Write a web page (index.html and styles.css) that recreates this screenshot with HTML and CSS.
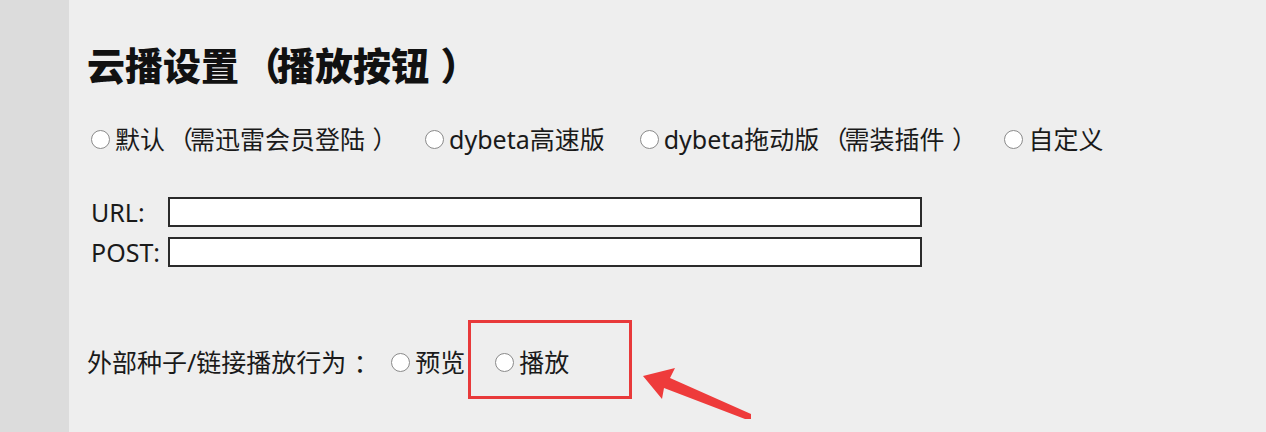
FILE: index.html
```html
<!doctype html>
<html lang="zh-CN">
<head>
    <meta charset="UTF-8">
    <title>云播设置</title>
    <link rel="stylesheet" href="styles.css">
</head>
<body>
<div class="side"></div>
<div class="main">
    <h2 class="title">云播设置<span class="po">（</span>播放按钮<span class="pc">）</span></h2>

    <div class="opts">
        <label class="opt"><input type="radio" name="player">默认<span class="po">（</span>需迅雷会员登陆<span class="pc">）</span></label>
        <label class="opt"><input type="radio" name="player">dybeta高速版</label>
        <label class="opt"><input type="radio" name="player">dybeta拖动版<span class="po">（</span>需装插件<span class="pc">）</span></label>
        <label class="opt"><input type="radio" name="player">自定义</label>
    </div>

    <div class="fields">
        <label for="url">URL:</label>
        <input id="url" type="text">
        <label for="post">POST:</label>
        <input id="post" type="text">
    </div>

    <div class="behave">
        <span class="behave-label">外部种子/链接播放行为<span class="pc">：</span></span>
        <label class="opt"><input type="radio" name="act">预览</label>
        <label class="opt"><input type="radio" name="act">播放</label>
    </div>

    <div class="mark"></div>
    <svg class="arrow" width="120" height="60" viewBox="0 0 120 60">
        <polygon points="3,12 35,4 30,14 111,50 111,55 105,55 24,24 22,35" fill="#ee3b3b"/>
    </svg>
</div>
</body>
</html>
```

FILE: styles.css
```css
* {
    margin: 0;
    padding: 0;
    box-sizing: border-box;
}

html,
body {
    width: 100%;
    height: 100%;
}

body {
    display: flex;
    overflow: hidden;
    font-family: "Noto Sans", "Noto Sans CJK SC", sans-serif;
    color: #1a1a1a;
    background: #eeeeee;
}

/* full-width punctuation sits nearer the middle of its cell in the original font */
.po {
    padding-left: 0.12em;
    letter-spacing: -0.12em;
}

.pc {
    padding-left: 0.3em;
    letter-spacing: -0.3em;
}

.side {
    width: 69px;
    flex-shrink: 0;
    background-color: #dcdcdc;
}

.main {
    position: relative;
    flex: 1;
    padding: 43px 0 0 18px;
    background-color: #eeeeee;
}

.title {
    font-size: 38px;
    line-height: 44px;
    font-weight: 900;
    color: #111;
}

.opts {
    display: flex;
    gap: 35px;
    margin-top: 37px;
    padding-left: 4px;
    font-size: 25px;
    line-height: 30px;
}

.opt {
    display: flex;
    align-items: center;
}

.opt input {
    appearance: none;
    flex-shrink: 0;
    width: 19px;
    height: 19px;
    margin-right: 5px;
    border: 1.5px solid #8a8a8a;
    border-radius: 50%;
    background: #fff;
}

.fields {
    display: grid;
    grid-template-columns: 77px 754px;
    row-gap: 10px;
    align-items: center;
    margin-top: 43px;
    padding-left: 4px;
    font-size: 25px;
    line-height: 30px;
}

.fields input {
    height: 30px;
    border: 2px solid #2a2a2a;
    background: #fff;
}

.behave {
    display: flex;
    align-items: center;
    margin-top: 80px;
    font-size: 25px;
    line-height: 30px;
}

.behave-label {
    margin-right: 20px;
}

.behave .opt {
    margin-right: 30px;
}

.mark {
    position: absolute;
    left: 399px;
    top: 320px;
    width: 164px;
    height: 79px;
    border: 3px solid #e8393a;
}

.arrow {
    position: absolute;
    left: 571px;
    top: 364px;
}
```
